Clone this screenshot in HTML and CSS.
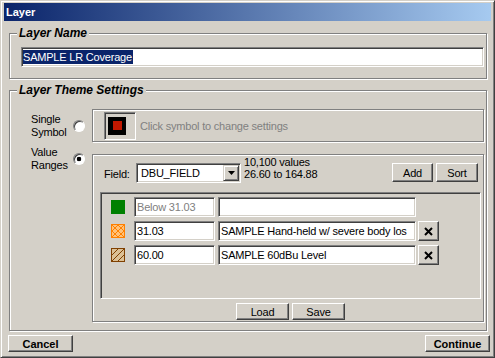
FILE: index.html
```html
<!DOCTYPE html>
<html lang="en">

<head>
    <meta charset="UTF-8">
    <title>Layer</title>
    <link rel="stylesheet" href="styles.css">
</head>

<body>

    <div class="window">
        <!-- Title bar -->
        <div class="titlebar">Layer</div>

        <div class="dialog-body">

            <!-- Layer Name -->
            <fieldset class="group">
                <legend>Layer Name</legend>
                <div class="name-body">
                    <div class="textbox name-box"><span class="selected">SAMPLE LR Coverage</span></div>
                </div>
            </fieldset>

            <!-- Layer Theme Settings -->
            <fieldset class="group theme-group">
                <legend>Layer Theme Settings</legend>
                <div class="theme-body">
                    <div class="opt-label single-label">Single<br>Symbol</div>
                    <span class="radio single-radio"></span>
                    <div class="panel symbol-panel">
                        <div class="symbol-btn"><span class="swatch"><span class="swatch-core"></span></span></div>
                        <span class="hint">Click symbol to change settings</span>
                    </div>

                    <div class="opt-label value-label">Value<br>Ranges</div>
                    <span class="radio checked value-radio"></span>
                    <div class="panel ranges-panel">
                        <div class="field-row">
                            <span class="field-label">Field:</span>
                            <div class="combo">
                                <span class="combo-text">DBU_FIELD</span>
                                <span class="combo-btn">
                                    <svg width="7" height="4" viewBox="0 0 7 4"><polygon points="0,0 7,0 3.5,4" fill="#000"/></svg>
                                </span>
                            </div>
                            <div class="stats">10,100 values<br>26.60 to 164.88</div>
                            <div class="field-buttons">
                                <button class="btn add-btn">Add</button>
                                <button class="btn sort-btn">Sort</button>
                            </div>
                        </div>

                        <div class="range-list">
                            <div class="range-row">
                                <svg class="range-icon" width="14" height="14" viewBox="0 0 14 14"><rect width="14" height="14" fill="#008000"/></svg>
                                <div class="textbox value-box disabled">Below 31.03</div>
                                <div class="textbox label-box"></div>
                            </div>
                            <div class="range-row">
                                <svg class="range-icon" width="14" height="14" viewBox="0 0 14 14">
                                    <rect x="0.5" y="0.5" width="13" height="13" fill="#ffc27a" stroke="#ff8000"/>
                                    <path d="M1 1L13 13M13 1L1 13M7 1L13 7L7 13L1 7Z" fill="none" stroke="#ff8000"/>
                                </svg>
                                <div class="textbox value-box">31.03</div>
                                <div class="textbox label-box">SAMPLE Hand-held w/ severe body los</div>
                                <button class="btn x-btn"><svg width="9" height="9" viewBox="0 0 9 9"><path d="M1 1L8 8M8 1L1 8" stroke="#000" stroke-width="2"/></svg></button>
                            </div>
                            <div class="range-row">
                                <svg class="range-icon" width="14" height="14" viewBox="0 0 14 14">
                                    <rect x="0.5" y="0.5" width="13" height="13" fill="#dcc094" stroke="#804000"/>
                                    <path d="M1 13L13 1M1 7L7 1M7 13L13 7" fill="none" stroke="#804000"/>
                                </svg>
                                <div class="textbox value-box">60.00</div>
                                <div class="textbox label-box">SAMPLE 60dBu Level</div>
                                <button class="btn x-btn"><svg width="9" height="9" viewBox="0 0 9 9"><path d="M1 1L8 8M8 1L1 8" stroke="#000" stroke-width="2"/></svg></button>
                            </div>
                        </div>

                        <div class="panel-buttons">
                            <button class="btn small-btn">Load</button>
                            <button class="btn small-btn">Save</button>
                        </div>
                    </div>
                </div>
            </fieldset>

            <!-- Dialog buttons -->
            <div class="dialog-buttons">
                <button class="btn main-btn">Cancel</button>
                <button class="btn main-btn">Continue</button>
            </div>
        </div>
    </div>

</body>

</html>
```

FILE: styles.css
```css
/* Global styles */
body {
    margin: 0;
    background-color: #d4d0c8;
    font: 11px "Liberation Sans", Arial, sans-serif;
    letter-spacing: -0.2px;
    color: #000;
}

/* Window frame */
.window {
    width: 495px;
    height: 358px;
    box-sizing: border-box;
    border: 1px solid;
    border-color: #d4d0c8 #404040 #404040 #d4d0c8;
    box-shadow: inset 1px 1px #fff, inset -1px -1px #808080;
    padding: 2px 3px 0;
    background-color: #d4d0c8;
}

.titlebar {
    height: 18px;
    line-height: 18px;
    padding-left: 2px;
    background: linear-gradient(90deg, #0a246a, #a6caf0);
    color: #fff;
    font-weight: bold;
    letter-spacing: 0;
}

.dialog-body {
    padding: 6px 4px 0 5px;
}

/* Group boxes */
.group {
    margin: 0;
    padding: 0;
    min-width: 0;
    border: 1px solid #808080;
    box-shadow: inset 1px 1px #fff, 1px 1px #fff;
}

.group legend {
    margin-left: 7px;
    padding: 0 2px;
    font: italic bold 12px/13px "Liberation Sans", Arial, sans-serif;
    letter-spacing: 0;
    background-color: #d4d0c8;
}

.theme-group {
    margin-top: 5px;
}

.name-body {
    padding: 7px 2px 11px 11px;
}

/* Edit boxes */
.textbox {
    height: 20px;
    box-sizing: border-box;
    padding: 1px 2px;
    line-height: 16px;
    background-color: #fff;
    border: 1px solid;
    border-color: #808080 #fff #fff #808080;
    box-shadow: inset 1px 1px #404040, inset -1px -1px #d4d0c8;
    white-space: nowrap;
    overflow: hidden;
}

.name-box {
    padding: 1px;
}

.selected {
    display: inline-block;
    line-height: 14px;
    background-color: #0a246a;
    color: #fff;
    padding-right: 1px;
}

.disabled {
    color: #808080;
}

/* Theme settings */
.theme-body {
    display: grid;
    grid-template-columns: 42px 19px 1fr;
    row-gap: 12px;
    padding: 12px 2px 8px 21px;
}

.opt-label {
    line-height: 13px;
}

.single-label,
.single-radio {
    align-self: center;
}

.value-label {
    align-self: start;
    margin-top: -8px;
}

.value-radio {
    align-self: start;
    margin-top: -1px;
}

.radio {
    width: 12px;
    height: 12px;
    box-sizing: border-box;
    border-radius: 50%;
    background-color: #fff;
    border: 1px solid;
    border-color: #808080 #fff #fff #808080;
    box-shadow: inset 1px 1px #404040;
}

.radio.checked {
    background: radial-gradient(circle, #000 0 2px, #fff 2.6px);
}

.panel {
    border: 1px solid #808080;
    box-shadow: inset 1px 1px #fff, 1px 1px #fff;
}

/* Single symbol */
.symbol-panel {
    height: 33px;
    box-sizing: border-box;
    display: flex;
    align-items: center;
    padding-left: 11px;
}

.symbol-btn {
    width: 32px;
    height: 28px;
    box-sizing: border-box;
    display: flex;
    align-items: center;
    padding-left: 3px;
    border: 1px solid;
    border-color: #808080 #fff #fff #808080;
    box-shadow: inset 1px 1px #404040, inset -1px -1px #d4d0c8;
}

.swatch {
    width: 18px;
    height: 18px;
    display: flex;
    align-items: center;
    justify-content: center;
    background-color: #000;
}

.swatch-core {
    width: 9px;
    height: 9px;
    background-color: #c01800;
}

.hint {
    margin-left: 4px;
    color: #808080;
}

/* Value ranges */
.ranges-panel {
    height: 168px;
    box-sizing: border-box;
    padding: 8px 2px 0 7px;
}

.field-row {
    display: flex;
    align-items: flex-start;
    height: 20px;
    padding: 0 3px 0 4px;
}

.field-label {
    width: 32px;
    line-height: 20px;
    margin-top: 1px;
}

.combo {
    width: 105px;
    height: 20px;
    box-sizing: border-box;
    display: flex;
    padding: 1px;
    background-color: #fff;
    border: 1px solid;
    border-color: #808080 #fff #fff #808080;
    box-shadow: inset 1px 1px #404040, inset -1px -1px #d4d0c8;
}

.combo-text {
    flex: 1;
    padding-left: 3px;
    line-height: 16px;
}

.combo-btn {
    width: 16px;
    height: 16px;
    box-sizing: border-box;
    display: flex;
    align-items: center;
    justify-content: center;
    background-color: #d4d0c8;
    border: 1px solid;
    border-color: #d4d0c8 #404040 #404040 #d4d0c8;
    box-shadow: inset 1px 1px #fff, inset -1px -1px #808080;
}

.stats {
    margin-left: 3px;
    margin-top: -7px;
    line-height: 12px;
}

.field-buttons {
    display: flex;
    gap: 3px;
    margin-left: auto;
}

/* Buttons */
.btn {
    box-sizing: border-box;
    padding: 0;
    font: 11px "Liberation Sans", Arial, sans-serif;
    letter-spacing: -0.2px;
    color: #000;
    background-color: #d4d0c8;
    border: 1px solid;
    border-color: #fff #404040 #404040 #fff;
    box-shadow: inset -1px -1px #808080;
}

.add-btn {
    width: 41px;
    height: 19px;
}

.sort-btn {
    width: 42px;
    height: 19px;
}

.range-list {
    height: 107px;
    box-sizing: border-box;
    margin-top: 9px;
    padding: 4px 0 0 10px;
    display: flex;
    flex-direction: column;
    gap: 4px;
    border: 1px solid;
    border-color: #808080 #fff #fff #808080;
    box-shadow: inset 1px 1px #404040, inset -1px -1px #d4d0c8;
}

.range-row {
    display: flex;
    align-items: center;
    height: 20px;
}

.range-icon {
    margin-right: 9px;
}

.value-box {
    width: 81px;
}

.label-box {
    width: 198px;
    margin-left: 3px;
}

.x-btn {
    width: 21px;
    height: 20px;
    margin-left: 2px;
    display: flex;
    align-items: center;
    justify-content: center;
}

.panel-buttons {
    display: flex;
    justify-content: center;
    gap: 3px;
    margin-top: 4px;
}

.small-btn {
    width: 53px;
    height: 17px;
}

/* Bottom buttons */
.dialog-buttons {
    display: flex;
    justify-content: space-between;
    margin: 4px -3px 0 -1px;
}

.main-btn {
    width: 65px;
    height: 17px;
    font-weight: bold;
    letter-spacing: 0;
}
```
